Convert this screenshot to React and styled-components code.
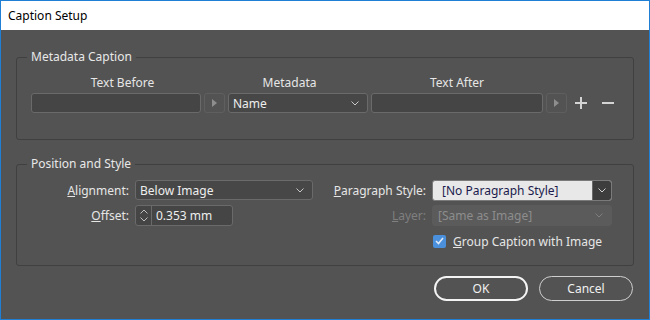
import React from "react";
import styled, { createGlobalStyle } from "styled-components";

const GlobalStyle = createGlobalStyle`
  html, body {
    margin: 0;
    padding: 0;
    background: #535353;
  }
  body {
    font-family: "Noto Sans", "Open Sans", sans-serif;
    font-size: 12px;
  }
`;

const Window = styled.div`
  width: 650px;
  height: 320px;
  box-sizing: border-box;
  border: 1px solid #1e7fd5;
  display: flex;
  flex-direction: column;
  background: #535353;
  color: #e6e6e6;
`;

const TitleBar = styled.div`
  height: 29px;
  flex: none;
  background: #ffffff;
  color: #000000;
  display: flex;
  align-items: center;
  padding-left: 7px;
  font-size: 12px;
`;

const Body = styled.div`
  flex: 1;
  padding: 19px 15px 0 15px;
  display: flex;
  flex-direction: column;
`;

const Group = styled.fieldset`
  margin: ${(p) => p.$top || 0}px 0 0 0;
  padding: 0;
  border: 1px solid #404040;
  border-radius: 3px;
  min-width: 0;
`;

const Legend = styled.legend`
  margin-left: 10px;
  padding: 0 4px;
  line-height: 16px;
  font-size: 12px;
  color: #e8e8e8;
`;

const ColLabel = styled.div`
  grid-column: ${(p) => p.$col};
  grid-row: 1;
  text-align: center;
  line-height: 16px;
  padding-left: ${(p) => p.$left || 0}px;
  padding-right: ${(p) => p.$right || 0}px;
`;

const MetaGrid = styled.div`
  display: grid;
  grid-template-columns: 170px 21px 140px 172px 21px auto;
  grid-template-rows: 16px 20px;
  column-gap: 3px;
  row-gap: 2px;
  padding: 10px 0 26px 14px;

  & > :not(${ColLabel}) {
    grid-row: 2;
  }
`;

const TextInput = styled.div`
  box-sizing: border-box;
  height: ${(p) => p.$h || 20}px;
  background: #454545;
  border: 1px solid #6a6a6a;
  border-radius: 3px;
  display: flex;
  align-items: center;
  padding-left: ${(p) => p.$pad || 5}px;
  color: #eeeeee;
`;

const ArrowButton = styled.div`
  box-sizing: border-box;
  height: 20px;
  border: 1px solid #5f5f5f;
  border-radius: 3px;
  display: flex;
  align-items: center;
  justify-content: center;
`;

const Select = styled.div`
  box-sizing: border-box;
  height: ${(p) => p.$h || 20}px;
  background: ${(p) => (p.$disabled ? "#5b5b5b" : "#474747")};
  border: 1px solid ${(p) => (p.$disabled ? "#5b5b5b" : "#6a6a6a")};
  border-radius: 3px;
  display: flex;
  align-items: center;
  justify-content: space-between;
  padding: 0 8px 0 ${(p) => p.$pad || 4}px;
  color: ${(p) => (p.$disabled ? "#8d8d8d" : "#eeeeee")};
`;

const LightSelect = styled.div`
  box-sizing: border-box;
  height: 21px;
  background: #e8e8e8;
  border: 1px solid #7a7a7a;
  border-radius: 3px;
  display: flex;
  align-items: stretch;
  overflow: hidden;
  color: #1b1b4d;
`;

const LightValue = styled.div`
  flex: 1;
  display: flex;
  align-items: center;
  padding-left: 9px;
`;

const DropButton = styled.div`
  width: 18px;
  background: #3d3d3d;
  border-left: 1px solid #6a6a6a;
  display: flex;
  align-items: center;
  justify-content: center;
`;

const Tools = styled.div`
  display: flex;
  align-items: center;
  gap: 15px;
  padding-left: 5px;
`;

const StyleGrid = styled.div`
  display: grid;
  grid-template-columns: 112px 178px 107px 180px;
  grid-template-rows: 20px 21px 20px;
  column-gap: 6px;
  row-gap: 5px;
  padding: 8px 0 14px 0;
`;

const FieldLabel = styled.div`
  grid-column: ${(p) => p.$col};
  text-align: right;
  align-self: center;
  white-space: nowrap;
  color: ${(p) => (p.$disabled ? "#7f7f7f" : "#e6e6e6")};
`;

const Spinner = styled.div`
  box-sizing: border-box;
  width: 98px;
  height: 21px;
  background: #454545;
  border: 1px solid #6a6a6a;
  border-radius: 3px;
  display: flex;
  align-items: stretch;
`;

const SpinArrows = styled.div`
  width: 16px;
  border-right: 1px solid #6a6a6a;
  display: flex;
  flex-direction: column;
  align-items: center;
  justify-content: space-between;
  padding: 3px 0;
  box-sizing: border-box;
`;

const SpinValue = styled.div`
  display: flex;
  align-items: center;
  padding-left: 4px;
  color: #eeeeee;
`;

const CheckRow = styled.label`
  grid-column: 4;
  display: flex;
  align-items: center;
  gap: 7px;
  padding-left: 1px;
`;

const CheckBox = styled.span`
  width: 13px;
  height: 13px;
  border-radius: 2px;
  background: #4a90dc;
  display: flex;
  align-items: center;
  justify-content: center;
`;

const Footer = styled.div`
  display: flex;
  justify-content: flex-end;
  gap: 11px;
  margin-top: 10px;
  padding-right: 1px;
`;

const Button = styled.button`
  box-sizing: border-box;
  width: 94px;
  height: 25px;
  border-radius: 13px;
  background: transparent;
  border: ${(p) => (p.$primary ? "2px solid #f4f4f4" : "1px solid #cfcfcf")};
  color: #f0f0f0;
  font-family: inherit;
  font-size: 12px;
  padding: 0;
`;

const Chevron = ({ color = "#c8c8c8" }) => (
  <svg width="8" height="5" viewBox="0 0 8 5">
    <polyline points="0.5,0.5 4,4 7.5,0.5" fill="none" stroke={color} strokeWidth="1" />
  </svg>
);

const Triangle = () => (
  <svg width="5" height="8" viewBox="0 0 5 8">
    <polygon points="0,0 5,4 0,8" fill="#8e8e8e" />
  </svg>
);

const Plus = () => (
  <svg width="12" height="12" viewBox="0 0 12 12">
    <path d="M6 0v12M0 6h12" stroke="#d4d4d4" strokeWidth="2" />
  </svg>
);

const Minus = () => (
  <svg width="12" height="12" viewBox="0 0 12 12">
    <path d="M0 6h12" stroke="#d4d4d4" strokeWidth="2" />
  </svg>
);

const SpinUp = () => (
  <svg width="8" height="5" viewBox="0 0 8 5">
    <polyline points="0.5,4.5 4,1 7.5,4.5" fill="none" stroke="#bdbdbd" strokeWidth="1" />
  </svg>
);

const Check = () => (
  <svg width="9" height="8" viewBox="0 0 9 8">
    <polyline points="1,4 3.5,6.5 8,1" fill="none" stroke="#dfe9f7" strokeWidth="1.6" />
  </svg>
);

export default function App() {
  return (
    <>
      <GlobalStyle />
      <Window>
        <TitleBar>Caption Setup</TitleBar>
        <Body>
          <Group>
            <Legend>Metadata Caption</Legend>
            <MetaGrid>
              <ColLabel $col="1" $left={13}>Text Before</ColLabel>
              <ColLabel $col="3" $right={17}>Metadata</ColLabel>
              <ColLabel $col="4">Text After</ColLabel>
              <TextInput />
              <ArrowButton><Triangle /></ArrowButton>
              <Select>Name<Chevron /></Select>
              <TextInput />
              <ArrowButton><Triangle /></ArrowButton>
              <Tools>
                <Plus />
                <Minus />
              </Tools>
            </MetaGrid>
          </Group>

          <Group $top={16}>
            <Legend>Position and Style</Legend>
            <StyleGrid>
              <FieldLabel $col="1"><u>A</u>lignment:</FieldLabel>
              <Select>Below Image<Chevron /></Select>
              <FieldLabel $col="3"><u>P</u>aragraph Style:</FieldLabel>
              <LightSelect>
                <LightValue>[No Paragraph Style]</LightValue>
                <DropButton><Chevron color="#d0d0d0" /></DropButton>
              </LightSelect>

              <FieldLabel $col="1"><u>O</u>ffset:</FieldLabel>
              <Spinner>
                <SpinArrows>
                  <SpinUp />
                  <Chevron color="#bdbdbd" />
                </SpinArrows>
                <SpinValue>0.353 mm</SpinValue>
              </Spinner>
              <FieldLabel $col="3" $disabled><u>L</u>ayer:</FieldLabel>
              <Select $h={21} $disabled $pad={5}>
                [Same as Image]
                <Chevron color="#7f7f7f" />
              </Select>

              <CheckRow>
                <CheckBox><Check /></CheckBox>
                <span><u>G</u>roup Caption with Image</span>
              </CheckRow>
            </StyleGrid>
          </Group>

          <Footer>
            <Button $primary>OK</Button>
            <Button>Cancel</Button>
          </Footer>
        </Body>
      </Window>
    </>
  );
}
